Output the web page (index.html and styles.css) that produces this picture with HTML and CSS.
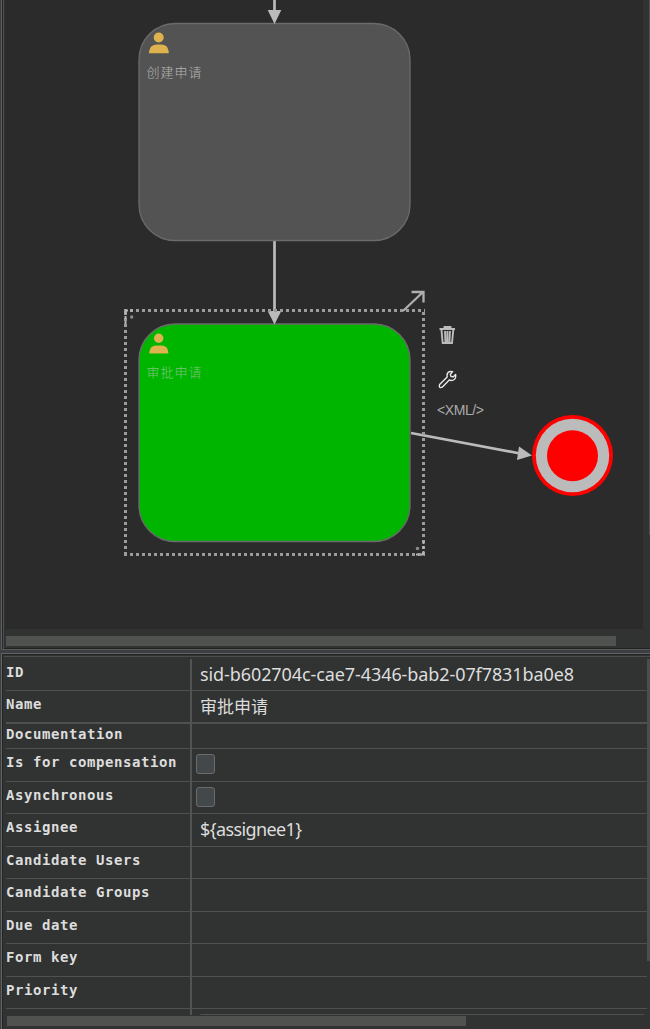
FILE: index.html
```
<!DOCTYPE html>
<html lang="zh-CN">
<head>
<meta charset="utf-8">
<title>BPMN Designer</title>
<link rel="stylesheet" href="styles.css">
</head>
<body>
<main class="window">
  <section class="editor">
    <svg class="canvas" viewBox="5 0 638 629" width="638" height="629">
      <g class="edge">
        <path d="M274.5 0V12M274.5 240V312M411 433L520 453.500"/>
      </g>
      <rect class="task" x="139" y="23.500" width="271" height="217" rx="36"/>
      <rect class="task task-selected" x="139" y="324" width="271" height="217.500" rx="36"/>
      <g class="arrow">
        <path d="M267.700 10H281.300L274.500 24Z"/>
        <path d="M267.700 311H281.300L274.500 324.500Z"/>
        <path d="M519 446.500L532 455.500L517 460Z"/>
      </g>
      <g class="user">
        <circle cx="158.700" cy="37.500" r="5"/>
        <path d="M149 53.300V51.500Q150 44.500 157 44.500H161Q168 44.500 168.700 51.500V53.300Z"/>
        <circle cx="158.700" cy="338.200" r="4.700"/>
        <path d="M149.300 353.500V352Q150.300 345.500 156 345.500H161.500Q167.500 345.500 168.300 352V353.500Z"/>
      </g>
      <text class="task-name" x="146.500" y="76.500">创建申请</text>
      <text class="task-name task-name-selected" x="146.500" y="376.500">审批申请</text>
      <g class="selection">
        <path d="M124 310.500H425M124 554.500H425M125.500 312V556M423.500 312V556"/>
      </g>
      <g class="grips">
        <path d="M125.500 311V324M125 310.500H133M423.500 541V555M416 554.500H425"/>
        <circle cx="131.700" cy="317" r="1.700"/>
        <circle cx="417.500" cy="548.500" r="1.700"/>
      </g>
      <path class="resize" d="M403 311L423 292M411.500 292H423.500V302.500"/>
      <g class="trash">
        <path class="trash-line" d="M439.500 329H455M444.500 329V327H450.500V329"/>
        <path class="trash-line" d="M441.500 330L442.700 343H452L453.300 330M445 331L445.500 342M447.400 331V342M449.900 331L449.400 342"/>
      </g>
      <path class="wrench" d="M439.600 384.500L447.200 377Q446.300 372.500 450 371.500L452.700 371.600L450.300 374.200L451 376.500L453.400 376.700L455.600 374.500Q456.500 378.700 453 380.200Q450.700 381 449.500 379.800L442.200 387.200Q439.800 388.300 439.300 386.500Z"/>
      <text class="xml" x="437" y="415" textLength="47">&lt;XML/&gt;</text>
      <circle class="end-outer" cx="572.500" cy="455.500" r="40.500"/>
      <circle class="end-ring" cx="572.500" cy="455.500" r="36.700"/>
      <circle class="end-core" cx="572.500" cy="455.800" r="25.500"/>
    </svg>
    <div class="editor-side"></div>
    <div class="thumb editor-thumb"></div>
  </section>
  <section class="properties">
    <div class="table">
      <div class="row h32"><div class="key">ID</div><div class="value"><span class="sid">sid-b602704c-cae7-4346-bab2-07f7831ba0e8</span></div></div>
      <div class="row thick"><div class="key">Name</div><div class="value cjk">审批申请</div></div>
      <div class="row h25"><div class="key">Documentation</div><div class="value"></div></div>
      <div class="row h33"><div class="key">Is for compensation</div><div class="value"><span class="check"></span></div></div>
      <div class="row h32"><div class="key">Asynchronous</div><div class="value"><span class="check"></span></div></div>
      <div class="row h33"><div class="key">Assignee</div><div class="value"><span class="assignee">${assignee1}</span></div></div>
      <div class="row h32"><div class="key">Candidate Users</div><div class="value"></div></div>
      <div class="row h33"><div class="key">Candidate Groups</div><div class="value"></div></div>
      <div class="row h32"><div class="key">Due date</div><div class="value"></div></div>
      <div class="row h33"><div class="key">Form key</div><div class="value"></div></div>
      <div class="row h32"><div class="key">Priority</div><div class="value"></div></div>
      <div class="row last"><div class="key"></div><div class="value"><div class="field"></div></div></div>
    </div>
    <div class="vertical-thumb"></div>
    <div class="thumb properties-thumb"></div>
  </section>
</main>
</body>
</html>
```
FILE: styles.css
```
* { box-sizing: border-box; }
body { margin: 0; background: #3c3f41; }
.window { width: 650px; height: 1029px; overflow: hidden; display: flex; flex-direction: column; }

.editor {
  height: 650px;
  margin-left: 1px;
  padding-left: 3px;
  border-left: 1px solid #5c5e60;
  border-bottom: 1px solid #56585a;
  background: #313332;
  box-shadow: inset 1px 0 #282828, inset 2px 0 #4b4d4e, inset 0 -1px #232323;
  display: grid;
  grid-template-columns: 638px 1px;
  grid-template-rows: 629px 10px;
  column-gap: 6px;
  row-gap: 7px;
}
.canvas { display: block; background: #2b2b2b; }
.editor-side { height: 535px; background: #4e504f; }
.thumb { height: 10px; background: #505250; }
.editor-thumb { width: 610px; margin-left: 1px; }

.edge path { stroke: #bbbbbb; stroke-width: 2.700; fill: none; }
.arrow path { fill: #bbbbbb; }
.task { fill: #535353; stroke: #6b6b6b; stroke-width: 1.300; }
.task-selected { fill: #00b500; }
.user { fill: #dfb250; }
.task-name { font: 300 13px "Noto Sans CJK SC", sans-serif; letter-spacing: 1px; fill: #b4b4b4; }
.task-name-selected { fill: #7cc47c; }
.selection path { stroke: #9c9c9c; stroke-width: 3; stroke-dasharray: 3 3; fill: none; }
.grips path { stroke: #b4b4b4; stroke-width: 2; stroke-dasharray: 3 2; fill: none; }
.grips circle { fill: #8c8c8c; }
.resize { stroke: #afafaf; stroke-width: 2.300; fill: none; }
.trash-line { stroke: #bcbcbc; stroke-width: 1.900; fill: none; }
.wrench { stroke: #e8e8e8; stroke-width: 1.400; fill: none; stroke-linejoin: round; }
.xml { font: 14px "Liberation Sans", Arial, sans-serif; fill: #aaaaaa; }
.end-outer, .end-core { fill: #ff0000; }
.end-ring { fill: #bbbbbb; }

.properties {
  height: 376px;
  margin: 3px 0 0 1px;
  padding: 5px 0 0 4px;
  border: 1px solid #626466;
  border-width: 1px 0 0 1px;
  background: #313332;
  box-shadow: inset 1px 1px #242424, inset 2px 2px #313332, inset 2px 3px #4a4c4d;
  display: grid;
  grid-template-columns: 641px 3px;
  grid-template-rows: 356px 10px;
  row-gap: 1px;
}
.table { overflow: hidden; }
.row { display: grid; grid-template-columns: 186px 1fr; border-bottom: 1px solid #4e5052; }
.h32 { height: 32px; }
.h33 { height: 33px; }
.h25 { height: 25px; }
.thick { height: 33px; border-bottom-width: 2px; }
.last { height: 10px; border: 0; }
.key {
  border-right: 2px solid #515356;
  font: bold 14px/18px "DejaVu Sans Mono", monospace;
  letter-spacing: .57px;
  color: #dddddd;
  padding-top: 4px;
  white-space: nowrap;
}
.h25 .key { padding-top: 1px; }
.value {
  padding: 3px 0 0 8px;
  color: #dddddd;
  font: 18px/24px "Noto Sans", sans-serif;
  white-space: nowrap;
}
.sid { letter-spacing: -.09px; }
.assignee { letter-spacing: -.6px; }
.value.cjk { padding-top: 4px; font: 17px/22px "Noto Sans CJK SC", sans-serif; }
.check { display: block; width: 19px; height: 20px; margin: 2px 0 0 -4px; background: #43494a; border: 1px solid #6b6b6b; border-radius: 3px; }
.last .value { padding-top: 5px; }
.field { height: 20px; margin-left: -3px; border: 1px solid #4e5052; border-radius: 5px; }
.vertical-thumb { height: 302px; background: #4c4e4d; }
.properties-thumb { width: 459px; margin-left: 1px; }
```
